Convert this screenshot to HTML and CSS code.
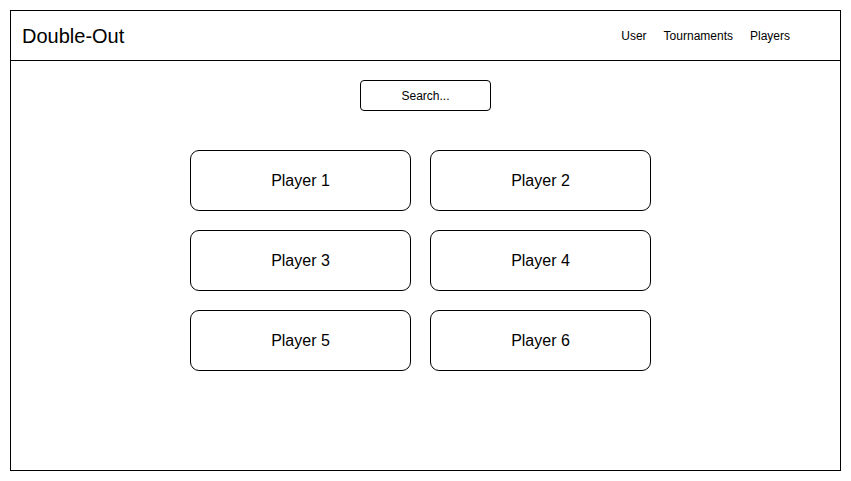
FILE: index.html
```html
<!DOCTYPE html>
<html>
<head>
<meta charset="utf-8">
<link rel="stylesheet" href="styles.css">
</head>
<body>
<div class="frame">
  <header class="header">
    <div class="title">Double-Out</div>
    <nav class="nav">
      <span class="nav-user">User</span>
      <span class="nav-tour">Tournaments</span>
      <span class="nav-players">Players</span>
    </nav>
  </header>
  <main class="content">
    <div class="search">Search...</div>
    <div class="grid">
      <div class="card">Player 1</div>
      <div class="card">Player 2</div>
      <div class="card">Player 3</div>
      <div class="card">Player 4</div>
      <div class="card">Player 5</div>
      <div class="card">Player 6</div>
    </div>
  </main>
</div>
</body>
</html>
```

FILE: styles.css
```css
html, body {
  margin: 0;
  padding: 0;
  background: #ffffff;
}
body {
  font-family: "Liberation Sans", Arial, sans-serif;
  color: #000;
}
.frame {
  box-sizing: border-box;
  margin: 10px 0 0 10px;
  width: 831px;
  height: 461px;
  border: 1px solid #000;
  display: flex;
  flex-direction: column;
}
.header {
  box-sizing: border-box;
  height: 50px;
  border-bottom: 1px solid #000;
  display: flex;
  align-items: center;
  justify-content: space-between;
  padding: 1px 0 0 11px;
}
.title {
  font-size: 20px;
  line-height: 24px;
}
.nav {
  display: flex;
  font-size: 12px;
  line-height: 14px;
  padding-right: 50px;
}
.nav-user {
  margin-right: 17px;
}
.nav-tour {
  margin-right: 17px;
}
.content {
  display: flex;
  flex-direction: column;
  padding-top: 19px;
}
.search {
  box-sizing: border-box;
  align-self: center;
  width: 131px;
  height: 31px;
  border: 1px solid #000;
  border-radius: 4px;
  font-size: 12px;
  display: flex;
  align-items: center;
  justify-content: center;
}
.grid {
  margin-top: 39px;
  margin-left: 179px;
  display: grid;
  grid-template-columns: 221px 221px;
  grid-auto-rows: 61px;
  column-gap: 19px;
  row-gap: 19px;
}
.card {
  box-sizing: border-box;
  border: 1px solid #000;
  border-radius: 9px;
  font-size: 16px;
  display: flex;
  align-items: center;
  justify-content: center;
}
```
